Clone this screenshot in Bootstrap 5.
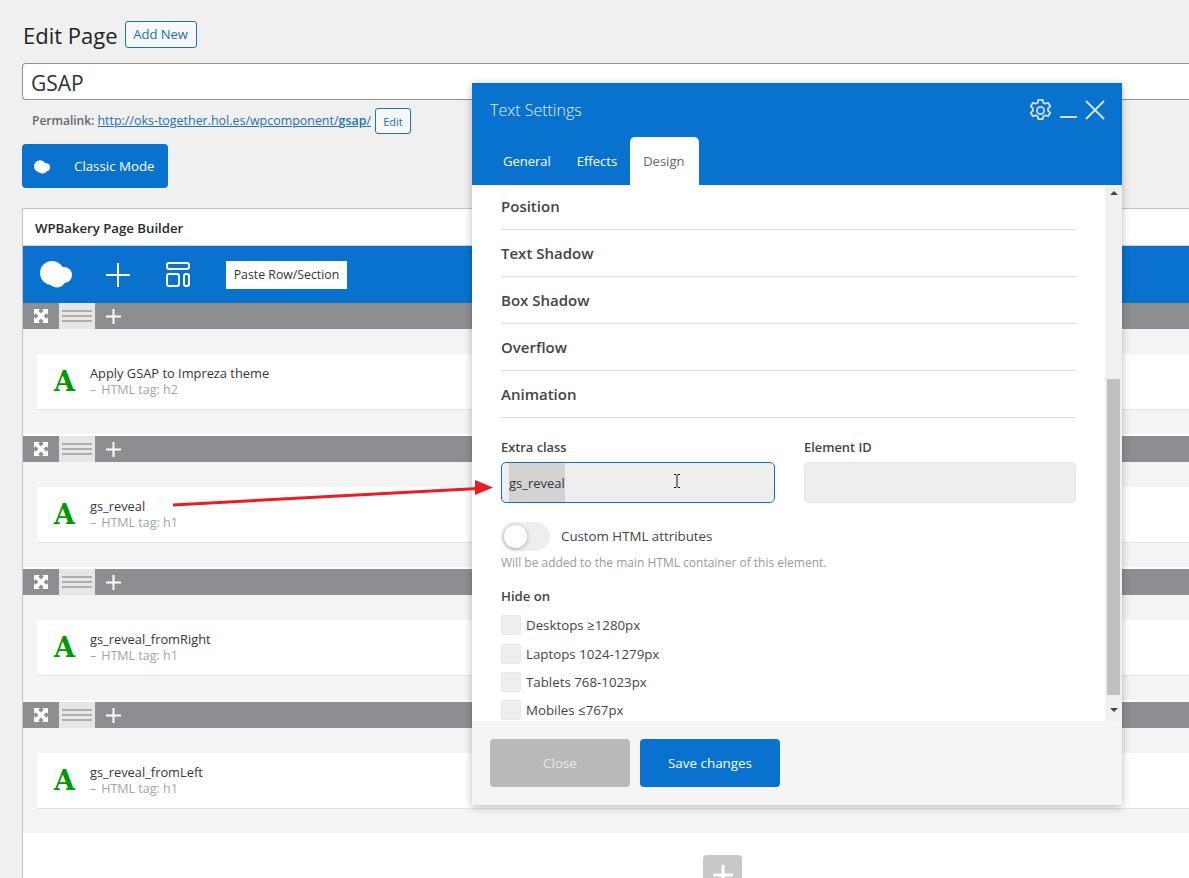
<!DOCTYPE html>
<html lang="en">
<head>
<meta charset="utf-8">
<title>Edit Page</title>
<link href="https://cdn.jsdelivr.net/npm/bootstrap@5.3.0/dist/css/bootstrap.min.css" rel="stylesheet">
<style>
html,body{height:878px;overflow:hidden}
body{background:#f0f0f0;color:#3c434a;font-family:"Open Sans","Liberation Sans",sans-serif;font-size:13px;position:relative}
.page-wrap{padding:21px 0 0 22px;width:1189px;height:878px;overflow:hidden}
.head-row{height:27px;gap:7px}
.page-title{font-size:22px;font-weight:400;color:#1d2327;margin:0 0 0 1px;height:27px;line-height:29px}
.wp-outline{border:1px solid #2271b1;color:#2271b1;background:#f6f7f7;border-radius:3px;padding:0;line-height:1}
.btn-add{width:72px;height:27px;font-size:13px;font-weight:500}
.btn-edit{width:36px;height:26px;font-size:11px}
.title-field{height:37px;margin-top:15px;border:1px solid #8c8f94;border-right:0;border-radius:4px 0 0 4px;background:#fff;color:#2c3338;font-size:21px;display:flex;align-items:center;padding:5px 0 0 8px;width:1167px}
.perma{height:26px;margin-top:8px;padding-left:10px;color:#646970;font-size:12.45px}
.perma>b{font-weight:600;font-size:12px}
.perma a b{font-weight:600}
.perma a{color:#2271b1;margin:0 4px 0 0}
.btn-classic{background:#0872ce;border:0;color:#fff;width:146px;height:44px;border-radius:4px;margin-top:10px;font-size:13.3px;padding:1px 0 0 12px;gap:24px}
.btn-classic:hover{background:#0872ce;color:#fff}
.builder{margin-top:20px;width:1167px;background:#fff;border:1px solid #c3c4c7;border-right:0;height:700px}
.builder-head{height:37px;display:flex;align-items:center;padding:4px 0 0 12px;font-weight:600;font-size:13.2px;color:#23282d;border-bottom:1px solid #ccd0d4}
.builder-bar{height:57px;background:#0872ce;display:flex;align-items:center;padding-left:17px}
.paste{background:#fff;color:#333;font-size:12.3px;width:121px;height:28px;border:0;border-radius:0;padding:2px 0 0;margin-left:36px}
.gap-plus{margin-left:34px}.gap-lay{margin-left:36px}
.row-block{margin-bottom:2px}
.row-bar{height:26px;background:#8c8e92;display:flex;align-items:center}
.row-move{width:36px;height:26px;display:flex;align-items:center;justify-content:center}
.row-handle{width:36px;height:26px;background:#e6e6e6;display:flex;flex-direction:column;justify-content:center;align-items:center;gap:3px}
.row-handle i{display:block;width:30px;height:2px;background:#aeaeae}
.row-plus{margin-left:11px;display:flex}
.row-body{background:#f4f4f4;height:105px;padding:25px 0 0 14px}
.el-card{background:#fff;height:56px;border:0;border-bottom:1px solid #e4e4e4;border-radius:0;display:flex;flex-direction:row;align-items:center}
.el-a{font-family:"DejaVu Serif",serif;font-weight:700;font-size:27px;color:#090;width:53px;text-align:right;padding-right:15px;line-height:1;margin-top:-1px;flex:none}
.el-title{color:#32373c;font-size:12.85px;line-height:16px;font-weight:500;padding-bottom:1px}
.el-sub{color:#a0a5aa;font-size:12.5px;line-height:16px}
.el-sub span{margin-left:5px}
.add-big{width:39px;height:39px;background:#c8c8c8;border-radius:4px;margin:22px 0 0 680px;display:flex;align-items:center;justify-content:center}
.modal-win{position:absolute;left:472px;top:83px;width:650px;height:722px;background:#fff;box-shadow:0 2px 8px rgba(0,0,0,.28);display:flex;flex-direction:column}
.modal-top{background:#0872ce;height:102px;flex:none}
.modal-line{height:54px;display:flex;align-items:center;padding:0 17px 0 18px;color:#fff}
.modal-name{font-size:16px;font-weight:300;color:#e6f0fa;margin-bottom:1px}
.modal-tools{margin-left:auto;display:flex;align-items:center;gap:8px}
.tab-strip{border:0;padding-left:18px;height:48px}
.tab-strip .nav-link{border:0;border-radius:5px 5px 0 0;height:48px;padding:1px 13px 0;display:flex;align-items:center;color:#fff;background:transparent;font-size:13px;margin:0}
.tab-strip .nav-link.active{background:#fff;color:#666;padding-right:15px}
.modal-mid{flex:1;display:flex;min-height:0}
.modal-scroll{flex:1;overflow:hidden;padding:0 29px 0 29px}
.acc-list{margin-top:-2px}
.acc-item{height:47px;border-bottom:1px solid #ddd;display:flex;align-items:center;font-size:15px;font-weight:600;color:#444}
.field-row{margin-top:19px;display:flex;gap:29px}
.field-col{width:272px}
.field-col.first{width:274px}
.field-lab{font-size:12.85px;font-weight:600;color:#444;line-height:20px;margin-bottom:5px;height:20px}
.field-box{height:41px;border:1px solid #e6e6e6;background:#eee;border-radius:5px;padding:0 0 0 7px;display:flex;align-items:stretch;color:#333;font-size:13px}
.field-box.focus{border-color:#0872ce}
.sel-txt{background:#d3d3d3;display:flex;align-items:center;padding-top:3px}
.toggler{display:block;width:49px;height:29px;border-radius:15px;background:#eee;position:relative;flex:none}
.toggler::after{content:"";position:absolute;left:3px;top:3px;width:23px;height:23px;border-radius:50%;background:#fff;box-shadow:0 1px 4px rgba(0,0,0,.3)}
.toggle-row{display:flex;align-items:center;gap:11px;margin-top:19px;color:#444;font-size:13.3px}
.toggle-row span+span{padding-top:1px}
.hint{color:#999;font-size:12px;line-height:16px;margin-top:4px}
.hide-lab{font-size:13.2px;font-weight:600;color:#444;line-height:20px;margin-top:15px;margin-bottom:9px;height:20px}
.chk-row{display:flex;align-items:center;gap:5px;margin:0 0 8px 0;padding:0;height:20px;min-height:0;color:#444;font-size:13.3px}
.chk-row.roomy{margin-bottom:9px}
.chk-row .form-check-input{width:20px;height:20px;margin:0;background-color:#eee;border:1px solid #e8e8e8;border-radius:2px;float:none}
.chk-row .form-check-label{line-height:20px}
.track{width:17px;background:#f0f0f0;flex:none;display:flex;flex-direction:column;align-items:center}
.arr-up,.arr-dn{width:0;height:0;border-left:4px solid transparent;border-right:4px solid transparent}
.arr-up{border-bottom:4px solid #444;margin-top:6px}
.arr-dn{border-top:4px solid #444;margin-top:13px}
.thumb{width:13px;height:316px;background:#c0c0c0;margin-top:184px}
.modal-foot{height:84px;flex:none;background:#f5f5f5;padding:18px;display:flex;gap:10px;align-items:flex-start}
.foot-btn{width:140px;height:48px;border:0;border-radius:4px;font-size:13.4px;padding:1px 0 0}
.foot-close,.foot-close:hover{background:#b9b9b9;color:#e8e8e8}
.foot-save,.foot-save:hover{background:#0872ce;color:#fff;font-weight:500}
.over-art{position:absolute;left:0;top:0;width:1189px;height:878px;pointer-events:none}
</style>
</head>
<body>
<svg width="0" height="0" class="d-block position-absolute">
<defs>
<symbol id="cloud" viewBox="0 0 32 27"><g fill="#fff"><circle cx="12" cy="12" r="12"/><circle cx="24" cy="14" r="8"/><ellipse cx="17" cy="20" rx="8" ry="6.500"/></g></symbol>
<symbol id="expand" viewBox="0 0 14 14"><path fill="#fff" d="M0 0h6L4.300 1.700 7 4.400 9.700 1.700 8 0h6v6l-1.700-1.700L9.600 7l2.700 2.700L14 8v6H8l1.700-1.700L7 9.600l-2.700 2.700L6 14H0V8l1.700 1.700L4.400 7 1.700 4.300 0 6z"/></symbol>
</defs>
</svg>
<div class="page-wrap">
  <div class="d-flex align-items-center head-row">
    <h1 class="page-title">Edit Page</h1>
    <button class="btn btn-add wp-outline" type="button">Add New</button>
  </div>
  <div class="title-field">GSAP</div>
  <div class="perma d-flex align-items-center"><b>Permalink:&nbsp;</b><a href="#">http://oks-together.hol.es/wpcomponent/<b>gsap</b>/</a><button class="btn btn-edit wp-outline" type="button">Edit</button></div>
  <button class="btn btn-classic d-flex align-items-center" type="button"><svg width="16" height="14"><use href="#cloud"/></svg><span>Classic Mode</span></button>
  <div class="builder">
    <div class="builder-head">WPBakery Page Builder</div>
    <div class="builder-bar">
      <svg width="32" height="27"><use href="#cloud"/></svg>
      <svg class="gap-plus" width="24" height="24" viewBox="0 0 24 24"><path d="M12 0v24M0 12h24" stroke="#fff" stroke-width="2"/></svg>
      <svg class="gap-lay" width="24" height="25" viewBox="0 0 24 25" fill="none" stroke="#fff" stroke-width="2"><rect x="1" y="1" width="22" height="6" rx="2"/><rect x="1" y="12" width="12" height="12" rx="2"/><rect x="18" y="12" width="5" height="12" rx="2"/></svg>
      <button class="btn paste" type="button">Paste Row/Section</button>
    </div>
    <div class="row-block"><div class="row-bar"><span class="row-move"><svg width="14" height="14"><use href="#expand"/></svg></span><span class="row-handle"><i></i><i></i><i></i></span><span class="row-plus"><svg width="15" height="15" viewBox="0 0 15 15"><path d="M7.500 0v15M0 7.500h15" stroke="#fff" stroke-width="2"/></svg></span></div>
      <div class="row-body"><div class="card el-card"><span class="el-a">A</span><div><div class="el-title">Apply GSAP to Impreza theme</div><div class="el-sub">–<span>HTML tag: h2</span></div></div></div></div></div>
    <div class="row-block"><div class="row-bar"><span class="row-move"><svg width="14" height="14"><use href="#expand"/></svg></span><span class="row-handle"><i></i><i></i><i></i></span><span class="row-plus"><svg width="15" height="15" viewBox="0 0 15 15"><path d="M7.500 0v15M0 7.500h15" stroke="#fff" stroke-width="2"/></svg></span></div>
      <div class="row-body"><div class="card el-card"><span class="el-a">A</span><div><div class="el-title">gs_reveal</div><div class="el-sub">–<span>HTML tag: h1</span></div></div></div></div></div>
    <div class="row-block"><div class="row-bar"><span class="row-move"><svg width="14" height="14"><use href="#expand"/></svg></span><span class="row-handle"><i></i><i></i><i></i></span><span class="row-plus"><svg width="15" height="15" viewBox="0 0 15 15"><path d="M7.500 0v15M0 7.500h15" stroke="#fff" stroke-width="2"/></svg></span></div>
      <div class="row-body"><div class="card el-card"><span class="el-a">A</span><div><div class="el-title">gs_reveal_fromRight</div><div class="el-sub">–<span>HTML tag: h1</span></div></div></div></div></div>
    <div class="row-block"><div class="row-bar"><span class="row-move"><svg width="14" height="14"><use href="#expand"/></svg></span><span class="row-handle"><i></i><i></i><i></i></span><span class="row-plus"><svg width="15" height="15" viewBox="0 0 15 15"><path d="M7.500 0v15M0 7.500h15" stroke="#fff" stroke-width="2"/></svg></span></div>
      <div class="row-body"><div class="card el-card"><span class="el-a">A</span><div><div class="el-title">gs_reveal_fromLeft</div><div class="el-sub">–<span>HTML tag: h1</span></div></div></div></div></div>
    <div class="add-big"><svg width="20" height="20" viewBox="0 0 20 20"><path d="M10 0v20M0 10h20" stroke="#fff" stroke-width="3"/></svg></div>
  </div>
</div>

<div class="modal-win">
  <div class="modal-top">
    <div class="modal-line">
      <span class="modal-name">Text Settings</span>
      <div class="modal-tools">
        <svg width="23" height="23" viewBox="1 1 22 22" fill="none" stroke="#cfe3f5" stroke-width="1.700" stroke-linejoin="round"><circle cx="12" cy="12" r="3.400"/><path d="M10 1.800h4l.7 2.800 1.800.9 2.800-.9 2 3.400-2.100 2v2.100l2.100 2-2 3.400-2.800-.9-1.800.9-.7 2.800h-4l-.7-2.800-1.800-.9-2.800.9-2-3.400 2.100-2V10l-2.100-2 2-3.400 2.800.9 1.800-.9z"/></svg>
        <svg width="17" height="17" viewBox="0 0 17 17"><path d="M0 15h17" stroke="#cfe3f5" stroke-width="2"/></svg>
        <svg width="20" height="20" viewBox="0 0 20 20"><path d="M1 1l18 18M19 1L1 19" stroke="#cfe3f5" stroke-width="2"/></svg>
      </div>
    </div>
    <ul class="nav nav-tabs tab-strip">
      <li class="nav-item"><a class="nav-link" href="#">General</a></li>
      <li class="nav-item"><a class="nav-link" href="#">Effects</a></li>
      <li class="nav-item"><a class="nav-link active" href="#">Design</a></li>
    </ul>
  </div>
  <div class="modal-mid">
    <div class="modal-scroll">
      <div class="acc-list">
        <div class="acc-item">Position</div>
        <div class="acc-item">Text Shadow</div>
        <div class="acc-item">Box Shadow</div>
        <div class="acc-item">Overflow</div>
        <div class="acc-item">Animation</div>
      </div>
      <div class="field-row">
        <div class="field-col first"><div class="field-lab">Extra class</div><div class="field-box focus"><span class="sel-txt">gs_reveal</span></div></div>
        <div class="field-col"><div class="field-lab">Element ID</div><div class="field-box"></div></div>
      </div>
      <div class="toggle-row"><span class="toggler"></span><span>Custom HTML attributes</span></div>
      <div class="hint">Will be added to the main HTML container of this element.</div>
      <div class="hide-lab">Hide on</div>
      <div class="form-check chk-row roomy"><input class="form-check-input" type="checkbox" id="c1"><label class="form-check-label" for="c1">Desktops ≥1280px</label></div>
      <div class="form-check chk-row"><input class="form-check-input" type="checkbox" id="c2"><label class="form-check-label" for="c2">Laptops 1024-1279px</label></div>
      <div class="form-check chk-row"><input class="form-check-input" type="checkbox" id="c3"><label class="form-check-label" for="c3">Tablets 768-1023px</label></div>
      <div class="form-check chk-row"><input class="form-check-input" type="checkbox" id="c4"><label class="form-check-label" for="c4">Mobiles ≤767px</label></div>
    </div>
    <div class="track"><span class="arr-up"></span><span class="thumb"></span><span class="arr-dn"></span></div>
  </div>
  <div class="modal-foot">
    <button class="btn foot-btn foot-close" type="button">Close</button>
    <button class="btn foot-btn foot-save" type="button">Save changes</button>
  </div>
</div>

<svg class="over-art" viewBox="0 0 1189 878">
  <path d="M173 505L478 488.500" stroke="#ed1c24" stroke-width="3"/>
  <path d="M475 480L493 487.500 475 495z" fill="#ed1c24"/>
  <path d="M674 474.500h2l1 1 1-1h2M677 475.500v11M674 487.500h2l1-1 1 1h2" fill="none" stroke="#111" stroke-width="1"/>
</svg>
</body>
</html>
